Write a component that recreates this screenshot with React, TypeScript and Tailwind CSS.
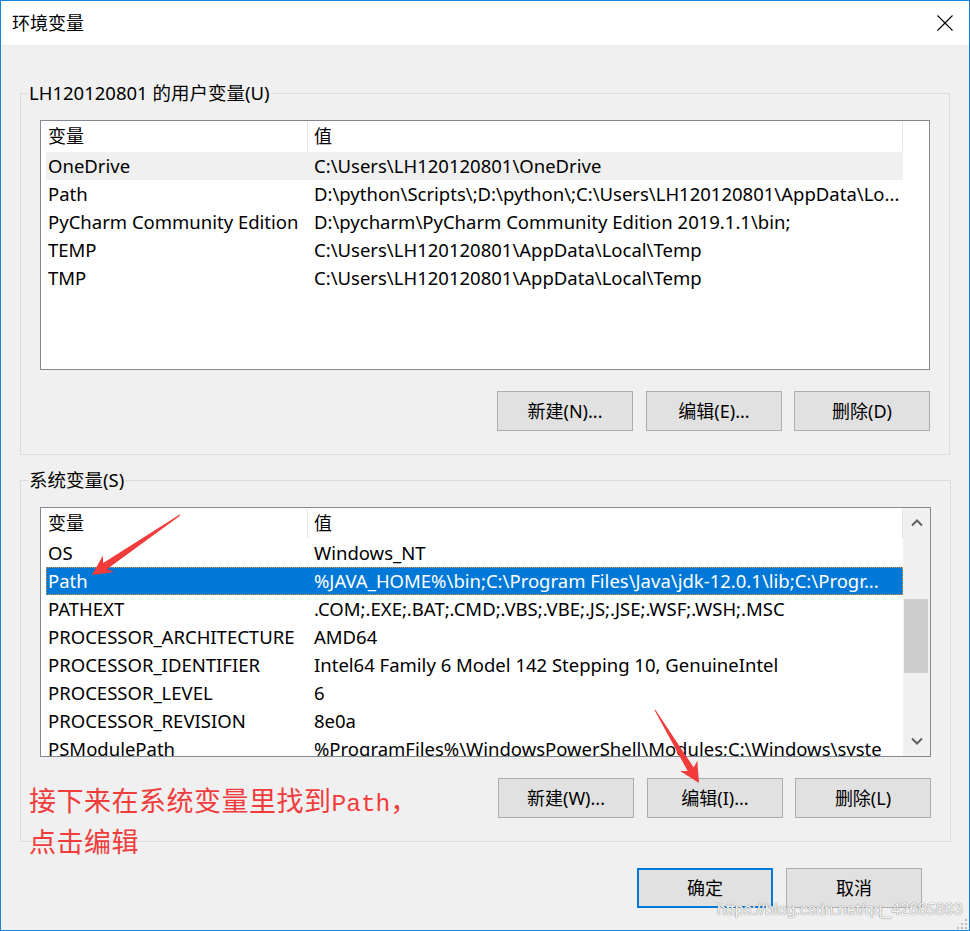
import React from "react";

type Row = { name: string; value: string; state?: "hover" | "selected" };

const userRows: Row[] = [
  { name: "OneDrive", value: "C:\\Users\\LH120120801\\OneDrive", state: "hover" },
  { name: "Path", value: "D:\\python\\Scripts\\;D:\\python\\;C:\\Users\\LH120120801\\AppData\\Lo..." },
  { name: "PyCharm Community Edition", value: "D:\\pycharm\\PyCharm Community Edition 2019.1.1\\bin;" },
  { name: "TEMP", value: "C:\\Users\\LH120120801\\AppData\\Local\\Temp" },
  { name: "TMP", value: "C:\\Users\\LH120120801\\AppData\\Local\\Temp" },
];

const sysRows: Row[] = [
  { name: "OS", value: "Windows_NT" },
  { name: "Path", value: "%JAVA_HOME%\\bin;C:\\Program Files\\Java\\jdk-12.0.1\\lib;C:\\Progr...", state: "selected" },
  { name: "PATHEXT", value: ".COM;.EXE;.BAT;.CMD;.VBS;.VBE;.JS;.JSE;.WSF;.WSH;.MSC" },
  { name: "PROCESSOR_ARCHITECTURE", value: "AMD64" },
  { name: "PROCESSOR_IDENTIFIER", value: "Intel64 Family 6 Model 142 Stepping 10, GenuineIntel" },
  { name: "PROCESSOR_LEVEL", value: "6" },
  { name: "PROCESSOR_REVISION", value: "8e0a" },
  { name: "PSModulePath", value: "%ProgramFiles%\\WindowsPowerShell\\Modules;C:\\Windows\\syste" },
];

function ListView({ rows, scrollbar }: { rows: Row[]; scrollbar: boolean }) {
  return (
    <div className="flex h-[250px] w-full border border-[#828790] bg-white overflow-hidden">
      <div className="flex w-[862px] shrink-0 flex-col overflow-hidden">
        <div className="flex h-[31px] shrink-0 items-stretch text-[18px]">
          <div className="flex w-[266px] shrink-0 items-center pl-[7px]">变量</div>
          <div className="my-[1px] w-px bg-[#e5e5e5]" />
          <div className="flex flex-1 items-center pl-[6px]">值</div>
          <div className="my-[1px] w-px bg-[#e5e5e5]" />
        </div>
        {rows.map((r) => (
          <div
            key={r.name}
            className={
              "ml-[5px] flex h-[28px] w-[857px] shrink-0 items-center whitespace-nowrap text-[18.5px] " +
              (r.state === "selected"
                ? "bg-[#0078d7] text-white outline-1 outline-dotted outline-[#e8902e] -outline-offset-1"
                : r.state === "hover"
                ? "bg-[#f0f0f0]"
                : "")
            }
          >
            <div className="w-[261px] shrink-0 overflow-hidden pl-[2px]">{r.name}</div>
            <div className="flex-1 overflow-hidden pl-[7px]">{r.value}</div>
          </div>
        ))}
      </div>
      {scrollbar ? (
        <div className="flex w-[27px] shrink-0 flex-col bg-[#f0f0f0]">
          <div className="flex h-[30px] shrink-0 items-center justify-center">
            <svg width="12" height="8" viewBox="0 0 12 8">
              <path d="M1 6.5 L6 1.5 L11 6.5" fill="none" stroke="#606060" strokeWidth="2" />
            </svg>
          </div>
          <div className="flex-1">
            <div className="ml-[1px] mt-[61px] h-[74px] w-[24px] bg-[#cdcdcd]" />
          </div>
          <div className="flex h-[30px] shrink-0 items-center justify-center">
            <svg width="12" height="8" viewBox="0 0 12 8">
              <path d="M1 1.5 L6 6.5 L11 1.5" fill="none" stroke="#606060" strokeWidth="2" />
            </svg>
          </div>
        </div>
      ) : (
        <div className="flex-1" />
      )}
    </div>
  );
}

function Btn({ label, primary }: { label: string; primary?: boolean }) {
  return (
    <div
      className={
        "flex h-[40px] w-[136px] items-center justify-center bg-[#e1e1e1] text-[18px] text-black " +
        (primary ? "border-2 border-[#0078d7]" : "border border-[#adadad]")
      }
    >
      {label}
    </div>
  );
}

function Group({
  title,
  rows,
  scrollbar,
  buttons,
}: {
  title: string;
  rows: Row[];
  scrollbar: boolean;
  buttons: string[];
}) {
  return (
    <fieldset className="border border-[#dcdcdc] pb-[23px]">
      <legend className="ml-[7px] px-[1px] text-[18.5px] leading-[24px]">{title}</legend>
      <div className="px-[19px]">
        <div className="mt-[15px]">
          <ListView rows={rows} scrollbar={scrollbar} />
        </div>
        <div className="mt-[21px] flex justify-end">
          <Btn label={buttons[0]} />
          <div className="ml-[13px]">
            <Btn label={buttons[1]} />
          </div>
          <div className="ml-[12px]">
            <Btn label={buttons[2]} />
          </div>
        </div>
      </div>
    </fieldset>
  );
}

export default function App() {
  return (
    <div className="relative flex h-[931px] w-[970px] flex-col overflow-hidden border border-[#1883d7] bg-[#f0f0f0] font-['Noto_Sans','Noto_Sans_CJK_SC',sans-serif] text-[18px] text-black">
      <div className="flex h-[44px] shrink-0 items-center justify-between bg-white pl-[11px] pr-[16px]">
        <span className="leading-[24px]">环境变量</span>
        <svg width="16" height="16" viewBox="0 0 16 16">
          <path d="M0.5 0.5 L15.5 15.5 M15.5 0.5 L0.5 15.5" stroke="#000" strokeWidth="1.1" fill="none" />
        </svg>
      </div>
      <div className="px-[19px] pt-[36px]">
        <Group
          title="LH120120801 的用户变量(U)"
          rows={userRows}
          scrollbar={false}
          buttons={["新建(N)...", "编辑(E)...", "删除(D)"]}
        />
        <div className="mt-[13px]">
          <Group
            title="系统变量(S)"
            rows={sysRows}
            scrollbar={true}
            buttons={["新建(W)...", "编辑(I)...", "删除(L)"]}
          />
        </div>
        <div className="mt-[26px] flex justify-end pr-[28px]">
          <Btn label="确定" primary />
          <div className="ml-[13px]">
            <Btn label="取消" />
          </div>
        </div>
      </div>

      {/* red annotation text */}
      <div className="absolute left-[28px] top-[781px] font-['Noto_Sans_CJK_SC',sans-serif] text-[27px] leading-[36px] tracking-[0.5px] text-[#f03c3c]">
        <div className="whitespace-nowrap">
          接下来在系统变量里找到<span className="font-['Liberation_Mono',monospace] text-[24.5px] tracking-normal">Path</span>，
        </div>
        <div>点击编辑</div>
      </div>

      {/* red arrows */}
      <svg
        className="pointer-events-none absolute left-[-1px] top-[-1px]"
        width="970"
        height="931"
        viewBox="0 0 970 931"
      >
        <polygon
          points="180.3,515.4 107.2,568.9 114.1,572 92,575 102.9,555.4 103.2,563.1 179.7,514.6"
          fill="#f23b3b"
        />
        <polygon
          points="655.4,709.8 693.7,767.5 697.3,760.7 699,783 680.1,771.1 687.7,771.1 654.6,710.2"
          fill="#f23b3b"
        />
      </svg>

      {/* watermark */}
      <div className="pointer-events-none absolute left-[716px] top-[900px] whitespace-nowrap font-['Liberation_Sans',sans-serif] text-[16px] leading-[18px] text-[#f4f4f4] [text-shadow:0_0_1px_#8a8a8a,0_0_1px_#8a8a8a]">
        https://blog.csdn.net/qq_42685893
      </div>

      {/* resize grip */}
      <svg className="absolute left-[955px] top-[917px]" width="13" height="13" viewBox="0 0 13 13">
        <rect x="9" y="1" width="2" height="2" fill="#bdbdbd" />
        <rect x="5" y="5" width="2" height="2" fill="#bdbdbd" />
        <rect x="9" y="5" width="2" height="2" fill="#bdbdbd" />
        <rect x="1" y="9" width="2" height="2" fill="#bdbdbd" />
        <rect x="5" y="9" width="2" height="2" fill="#bdbdbd" />
        <rect x="9" y="9" width="2" height="2" fill="#bdbdbd" />
      </svg>
    </div>
  );
}
